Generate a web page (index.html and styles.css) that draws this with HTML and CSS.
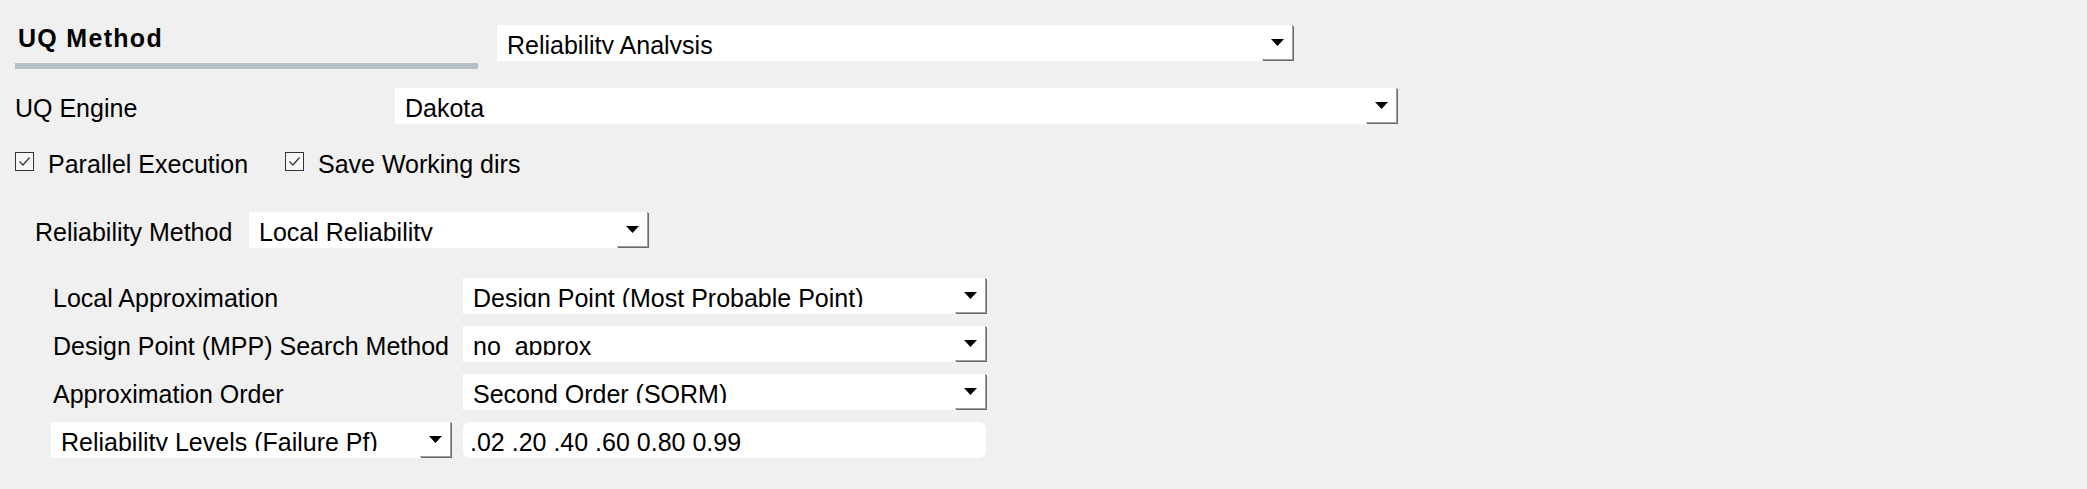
FILE: index.html
```html
<!DOCTYPE html>
<html>
<head>
<meta charset="utf-8">
<link rel="stylesheet" href="styles.css">
</head>
<body>
<div class="page">
  <div class="row1">
    <div class="hdr">
      <div class="hdr-title">UQ Method</div>
      <div class="hdr-bar"></div>
    </div>
    <div class="combo w-method">
      <div class="ctext">Reliability Analysis</div>
      <div class="btn"><svg width="13" height="7" viewBox="0 0 13 7"><polygon points="0,0 13,0 6.5,7" fill="#000"/></svg></div>
    </div>
  </div>

  <div class="row row-engine">
    <div class="label lab-engine">UQ Engine</div>
    <div class="combo w-engine">
      <div class="ctext">Dakota</div>
      <div class="btn"><svg width="13" height="7" viewBox="0 0 13 7"><polygon points="0,0 13,0 6.5,7" fill="#000"/></svg></div>
    </div>
  </div>

  <div class="checks">
    <div class="check check1">
      <span class="box"><svg width="17" height="17" viewBox="0 0 17 17"><polyline points="3.5,8.5 7,12 13.5,4.5" fill="none" stroke="#3a3a3a" stroke-width="1.3"/></svg></span>
      <span class="ctext-plain">Parallel Execution</span>
    </div>
    <div class="check">
      <span class="box"><svg width="17" height="17" viewBox="0 0 17 17"><polyline points="3.5,8.5 7,12 13.5,4.5" fill="none" stroke="#3a3a3a" stroke-width="1.3"/></svg></span>
      <span class="ctext-plain">Save Working dirs</span>
    </div>
  </div>

  <div class="row row-rel">
    <div class="label lab-rel">Reliability Method</div>
    <div class="combo w-rel">
      <div class="ctext">Local Reliability</div>
      <div class="btn"><svg width="13" height="7" viewBox="0 0 13 7"><polygon points="0,0 13,0 6.5,7" fill="#000"/></svg></div>
    </div>
  </div>

  <div class="grid">
    <div class="row sub">
      <div class="label lab-sub">Local Approximation</div>
      <div class="combo w-sub">
        <div class="ctext">Design Point (Most Probable Point)</div>
        <div class="btn"><svg width="13" height="7" viewBox="0 0 13 7"><polygon points="0,0 13,0 6.5,7" fill="#000"/></svg></div>
      </div>
    </div>
    <div class="row sub">
      <div class="label lab-sub">Design Point (MPP) Search Method</div>
      <div class="combo w-sub">
        <div class="ctext">no_approx</div>
        <div class="btn"><svg width="13" height="7" viewBox="0 0 13 7"><polygon points="0,0 13,0 6.5,7" fill="#000"/></svg></div>
      </div>
    </div>
    <div class="row sub">
      <div class="label lab-sub">Approximation Order</div>
      <div class="combo w-sub">
        <div class="ctext">Second Order (SORM)</div>
        <div class="btn"><svg width="13" height="7" viewBox="0 0 13 7"><polygon points="0,0 13,0 6.5,7" fill="#000"/></svg></div>
      </div>
    </div>
    <div class="row sub last">
      <div class="combo w-lev">
        <div class="ctext">Reliability Levels (Failure Pf)</div>
        <div class="btn"><svg width="13" height="7" viewBox="0 0 13 7"><polygon points="0,0 13,0 6.5,7" fill="#000"/></svg></div>
      </div>
      <div class="edit">.02 .20 .40 .60 0.80 0.99</div>
    </div>
  </div>
</div>
</body>
</html>
```

FILE: styles.css
```css
html, body {
  margin: 0;
  padding: 0;
  background: #f0f0f0;
}
body {
  font-family: "Liberation Sans", Arial, sans-serif;
  font-size: 25px;
  color: #000;
  width: 2087px;
  height: 489px;
  overflow: hidden;
}
.page {
  padding-top: 24px;
}
.row1 {
  display: flex;
  align-items: flex-start;
  margin-left: 15px;
}
.hdr {
  width: 463px;
}
.hdr-title {
  font-weight: bold;
  line-height: 28px;
  padding-left: 3px;
  letter-spacing: 1.3px;
}
.hdr-bar {
  height: 6px;
  margin-top: 11px;
  background: #b5bfc6;
}
.combo {
  display: flex;
  height: 36px;
  background: #fff;
  box-sizing: border-box;
}
.ctext {
  flex: 1;
  padding-left: 10px;
  margin-top: 6px;
  height: 23px;
  line-height: 28px;
  overflow: hidden;
  white-space: nowrap;
}
.btn {
  width: 31px;
  height: 35px;
  box-sizing: border-box;
  border-right: 1px solid #a0a0a0;
  border-bottom: 1px solid #a0a0a0;
  box-shadow: 1px 1px 0 #696969;
  display: flex;
  align-items: center;
  justify-content: center;
  flex: none;
}
.btn svg {
  display: block;
}
.w-method {
  width: 796px;
  margin-left: 19px;
  margin-top: 1px;
}
.row {
  display: flex;
  align-items: flex-start;
}
.label {
  margin-top: 6px;
  line-height: 28px;
  white-space: nowrap;
  flex: none;
}
.row-engine {
  margin-top: 19px;
  margin-left: 15px;
}
.lab-engine {
  width: 380px;
}
.w-engine {
  width: 1002px;
}
.checks {
  display: flex;
  margin-top: 26px;
  margin-left: 15px;
  line-height: 28px;
}
.check {
  display: flex;
  align-items: flex-start;
}
.check1 {
  width: 270px;
}
.box {
  width: 19px;
  height: 19px;
  box-sizing: border-box;
  border: 1px solid #333;
  background: #f7f7f7;
  margin-top: 2px;
  margin-right: 14px;
  display: block;
}
.box svg {
  display: block;
}
.ctext-plain {
  white-space: nowrap;
}
.row-rel {
  margin-top: 34px;
  margin-left: 35px;
}
.lab-rel {
  width: 214px;
}
.w-rel {
  width: 399px;
}
.grid {
  margin-top: 30px;
  display: flex;
  flex-direction: column;
  gap: 12px;
}
.sub {
  margin-left: 53px;
}
.lab-sub {
  width: 410px;
}
.w-sub {
  width: 523px;
}
.sub.last {
  margin-left: 51px;
  gap: 12px;
}
.w-lev {
  width: 400px;
}
.edit {
  width: 523px;
  height: 36px;
  box-sizing: border-box;
  background: #fff;
  border-radius: 7px;
  padding-left: 7px;
  padding-top: 6px;
  line-height: 28px;
  white-space: nowrap;
}
```
